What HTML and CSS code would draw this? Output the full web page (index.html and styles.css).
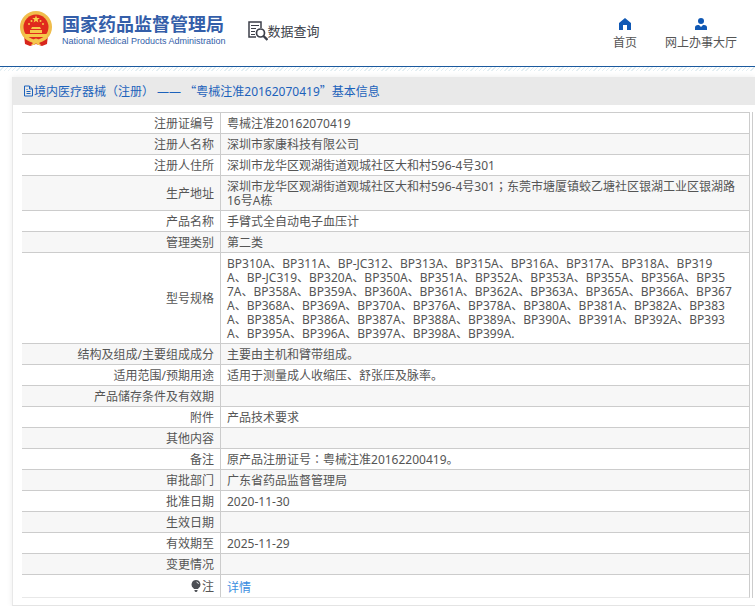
FILE: index.html
```html
<!DOCTYPE html>
<html lang="zh-CN">
<head>
    <meta charset="UTF-8">
    <meta name="viewport" content="width=device-width, initial-scale=1.0">
    <title>国家药品监督管理局 数据查询</title>
    <link rel="stylesheet" href="styles.css">
</head>
<body>
    <header class="header">
        <a class="logo" href="#">
            <svg class="emblem" viewBox="0 0 34 36" aria-hidden="true">
                <path d="M5 24h24l-1 9-5 2-6-2-6 2-5-2z" fill="#d8251c"/>
                <circle cx="17" cy="16" r="16" fill="#f0bd4c"/>
                <circle cx="17" cy="16" r="12.500" fill="#e02a1d"/>
                <path d="M17 4.500l1 2.600h2.800l-2.200 1.700.8 2.700-2.400-1.600-2.400 1.600.8-2.700-2.200-1.700H16z" fill="#f8d04c"/>
                <g fill="#f6c84a">
                    <circle cx="10" cy="13" r="1"/>
                    <circle cx="12.500" cy="10" r="1"/>
                    <circle cx="21.500" cy="10" r="1"/>
                    <circle cx="24" cy="13" r="1"/>
                    <path d="M13 16h8l1 2H12zM11 19h12v3H11zM6 23h22v3H6z"/>
                </g>
                <path d="M6 26q6 1 8 3h6q2-2 8-3l-2 3q-4 0-6 3l2 2h-3l-2-2-2 2h-3l2-2q-2-3-6-3z" fill="#f5c64e"/>
                <circle cx="17" cy="30" r="2.500" fill="#f5c64e"/>
            </svg>
            <span class="logo-text">
                <span class="logo-cn">国家药品监督管理局</span>
                <span class="logo-en">National Medical Products Administration</span>
            </span>
        </a>
        <a class="search-title" href="#">
            <svg class="search-icon" viewBox="0 0 20 20" fill="none" stroke="#3c3f4a" aria-hidden="true">
                <path d="M13 7V1H1v15h7" stroke-width="1.500"/>
                <path d="M3 4.500h8M3 7.500h5M3 10.500h4M3 13.500h4" stroke-width="1"/>
                <circle cx="12.500" cy="12" r="4" stroke-width="1.700"/>
                <path d="M15.500 15l4 4" stroke-width="2.400"/>
            </svg>
            <span>数据查询</span>
        </a>
        <nav class="nav">
            <a href="#">
                <svg viewBox="0 0 12 12" aria-hidden="true"><path d="M6 0l6 5v7H8V7H4v5H0V5z" fill="#1058b4"/></svg>
                <span>首页</span>
            </a>
            <a href="#">
                <svg viewBox="0 0 12 12" aria-hidden="true"><circle cx="6" cy="3" r="3" fill="#1058b4"/><path d="M0 12V9.500Q0 7 3 7h1l2 2 2-2h1q3 0 3 2.500V12z" fill="#1058b4"/></svg>
                <span>网上办事大厅</span>
            </a>
        </nav>
    </header>
    <div class="stripe"></div>

    <main class="card">
        <h1 class="card-title">
            <svg viewBox="0 0 11 12" fill="none" stroke="#1c62bb" aria-hidden="true"><path d="M1.500 1h5l3 3v7h-8zM6.500 1v3h3M3.500 4.500h1M3.500 6.500h4M3.500 8.500h4"/></svg>
            <span>境内医疗器械（注册） —— <span class="cjk">“</span>粤械注准20162070419<span class="cjk">”</span>基本信息</span>
        </h1>
        <div class="table-box">
            <table class="info">
                <tr><th scope="row">注册证编号</th><td>粤械注准20162070419</td></tr>
                <tr><th scope="row">注册人名称</th><td>深圳市家康科技有限公司</td></tr>
                <tr><th scope="row">注册人住所</th><td>深圳市龙华区观湖街道观城社区大和村596-4号301</td></tr>
                <tr><th scope="row">生产地址</th><td>深圳市龙华区观湖街道观城社区大和村596-4号301<span class="mid" lang="zh-TW">；</span>东莞市塘厦镇蛟乙塘社区银湖工业区银湖路<br>16号A栋</td></tr>
                <tr><th scope="row">产品名称</th><td>手臂式全自动电子血压计</td></tr>
                <tr><th scope="row">管理类别</th><td>第二类</td></tr>
                <tr>
                    <th scope="row">型号规格</th>
                    <td>
                        BP310A、BP311A、BP-JC312、BP313A、BP315A、BP316A、BP317A、BP318A、BP319<br>
                        A、BP-JC319、BP320A、BP350A、BP351A、BP352A、BP353A、BP355A、BP356A、BP35<br>
                        7A、BP358A、BP359A、BP360A、BP361A、BP362A、BP363A、BP365A、BP366A、BP367<br>
                        A、BP368A、BP369A、BP370A、BP376A、BP378A、BP380A、BP381A、BP382A、BP383<br>
                        A、BP385A、BP386A、BP387A、BP388A、BP389A、BP390A、BP391A、BP392A、BP393<br>
                        A、BP395A、BP396A、BP397A、BP398A、BP399A.
                    </td>
                </tr>
                <tr><th scope="row">结构及组成/主要组成成分</th><td>主要由主机和臂带组成。</td></tr>
                <tr><th scope="row">适用范围/预期用途</th><td>适用于测量成人收缩压、舒张压及脉率。</td></tr>
                <tr><th scope="row">产品储存条件及有效期</th><td></td></tr>
                <tr><th scope="row">附件</th><td>产品技术要求</td></tr>
                <tr><th scope="row">其他内容</th><td></td></tr>
                <tr><th scope="row">备注</th><td>原产品注册证号<span class="mid" lang="zh-TW">：</span>粤械注准20162200419。</td></tr>
                <tr><th scope="row">审批部门</th><td>广东省药品监督管理局</td></tr>
                <tr><th scope="row">批准日期</th><td>2020-11-30</td></tr>
                <tr><th scope="row">生效日期</th><td></td></tr>
                <tr><th scope="row">有效期至</th><td>2025-11-29</td></tr>
                <tr><th scope="row">变更情况</th><td></td></tr>
                <tr class="note">
                    <th scope="row"><svg viewBox="0 0 10 12" aria-hidden="true"><path d="M5 0a4.500 4.500 0 0 1 2.500 8.200L7 9H3l-.5-.8A4.500 4.500 0 0 1 5 0zM3.500 10h3v1l-1 1h-1l-1-1z" fill="#4c4f54"/><path d="M5.500 2q1.700.3 2 2" fill="none" stroke="#fff" stroke-width=".8"/></svg>注</th>
                    <td><a href="#">详情</a></td>
                </tr>
            </table>
        </div>
    </main>
</body>
</html>
```

FILE: styles.css
```css
* {
    box-sizing: border-box;
}

body {
    margin: 0;
    font-family: "Noto Sans", "Noto Sans CJK SC", sans-serif;
    font-size: 12px;
    line-height: 14px;
    color: #555;
    background-color: #fff;
    overflow-x: hidden;
}

a {
    color: inherit;
    text-decoration: none;
}

/* full-width quotes */
.cjk {
    font-family: "Noto Sans CJK SC", sans-serif;
}

/* centred colon and semicolon */
.mid {
    font-family: "Noto Sans CJK TC", sans-serif;
    line-height: 0;
}

/* header */
.header {
    display: flex;
    align-items: center;
    height: 67px;
    padding: 0 18px 4px 19px;
    border-bottom: 1px solid #1b5a9e;
}

.stripe {
    height: 4px;
    background: repeating-linear-gradient(135deg, #fff 0, #fff 2px, #e3eef2 2px, #e3eef2 3px);
}

.logo {
    display: flex;
    align-items: center;
    gap: 9px;
    padding-bottom: 4px;
    color: #345ea9;
}

.emblem {
    width: 34px;
    height: 36px;
}

.logo-text {
    display: flex;
    flex-direction: column;
    padding-top: 4px;
    white-space: nowrap;
}

.logo-cn {
    font-size: 18px;
    line-height: 20px;
    font-weight: bold;
}

.logo-en {
    font-family: "Liberation Sans", Arial, sans-serif;
    font-size: 9px;
    line-height: 14px;
}

.search-title {
    display: flex;
    align-items: center;
    margin-left: 22px;
    font-size: 13px;
    line-height: 20px;
    color: #3c3f4a;
}

.search-icon {
    width: 20px;
    height: 20px;
}

.nav {
    display: flex;
    gap: 28px;
    margin-left: auto;
    padding-top: 6px;
}

.nav a {
    display: flex;
    flex-direction: column;
    align-items: center;
    gap: 6px;
}

.nav svg {
    width: 12px;
    height: 12px;
}

/* card */
.card {
    margin: 6px 0 0 12px;
    padding-bottom: 7px;
    border-left: 1px solid #e8e8e8;
    border-bottom: 1px solid #e4e4e4;
    box-shadow: 0 0 6px rgba(0, 0, 0, 0.08);
}

.card-title {
    display: flex;
    align-items: center;
    height: 28px;
    margin: 0;
    padding: 0 0 0 10px;
    font-size: 12px;
    font-weight: normal;
    color: #1c62bb;
    background-color: #e9e9e9;
}

.card-title svg {
    width: 11px;
    height: 12px;
}

.table-box {
    margin: 7px 2px 0 9px;
    padding-right: 2px;
    border-right: 1px solid #ccc;
}

.info {
    width: 100%;
    border-spacing: 0;
    border-right: 1px solid #ccc;
    border-bottom: 1px solid #e8e8e8;
}

.info th,
.info td {
    height: 21px;
    padding: 4px 6px 2px;
    border-top: 1px solid #ccc;
}

.info th {
    width: 198px;
    font-weight: normal;
    text-align: right;
}

.info td {
    border-left: 1px solid #ccc;
}

.info tr:nth-child(even) {
    background-color: #f7f7f7;
}

.info .note th,
.info .note td {
    height: 23px;
}

.info .note td {
    padding: 6px 6px 2px;
}

.note svg {
    width: 10px;
    height: 12px;
    margin-right: 1px;
    vertical-align: -1px;
}

.note a {
    color: #3b8ee0;
}
```
